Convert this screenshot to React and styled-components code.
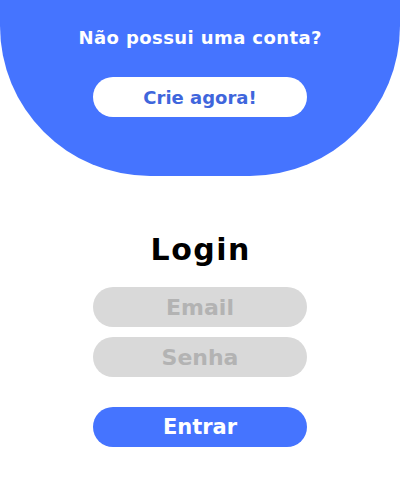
import React, { useState } from "react";
import styled, { createGlobalStyle } from "styled-components";

const GlobalStyle = createGlobalStyle`
    body {
        margin: 0;
        background: #ffffff;
        font-family: "DejaVu Sans", Inter, sans-serif;
    }
`;

export const Page = styled.div`
    width: 400px;
    height: 500px;
    display: flex;
    flex-direction: column;
    align-items: center;
`;

export const Header = styled.header`
    width: 100%;
    height: 176px;
    box-sizing: border-box;
    padding-top: 26px;
    background-color: #4574ff;
    border-radius: 0 0 150px 150px;
    display: flex;
    flex-direction: column;
    align-items: center;
    gap: 27px;
`;

export const Question = styled.p`
    margin: 0;
    color: #ffffff;
    font-size: 18px;
    font-weight: 700;
    line-height: 24px;
    letter-spacing: 0.4px;
    text-indent: 0.4px;
`;

export const Pill = styled.button`
    width: 214px;
    height: 40px;
    border: none;
    border-radius: 20px;
    padding: 0;
    font-family: "DejaVu Sans", Inter, sans-serif;
    font-weight: 700;
    font-size: ${(p) => (p.$small ? "18px" : "21px")};
    color: ${(p) => p.$color};
    background-color: ${(p) => p.$bg};
    cursor: pointer;
`;

export const Form = styled.form`
    display: flex;
    flex-direction: column;
    align-items: center;
    gap: 10px;
    margin-top: 54px;
`;

export const Title = styled.h1`
    margin: 0 0 7px;
    font-size: 30px;
    font-weight: 700;
    line-height: 40px;
    letter-spacing: 1.5px;
    text-indent: 1.5px;
    color: #000000;
`;

export const Input = styled.input`
    width: 214px;
    height: 40px;
    box-sizing: border-box;
    border: none;
    border-radius: 20px;
    background-color: #d9d9d9;
    text-align: center;
    font-family: "DejaVu Sans", Inter, sans-serif;
    font-weight: 700;
    font-size: 22px;
    color: #555;
    outline: none;

    &::placeholder {
        color: #b3b3b3;
    }
`;

export const Actions = styled.div`
    margin-top: 20px;
`;

const App = () => {
    const [email, setEmail] = useState("");
    const [senha, setSenha] = useState("");

    return (
        <Page>
            <GlobalStyle />
            <Header>
                <Question>Não possui uma conta?</Question>
                <Pill type="button" $small $bg="#ffffff" $color="#3f66dc">
                    Crie agora!
                </Pill>
            </Header>
            <Form onSubmit={(e) => e.preventDefault()}>
                <Title>Login</Title>
                <Input
                    type="email"
                    placeholder="Email"
                    value={email}
                    onChange={(e) => setEmail(e.target.value)}
                />
                <Input
                    type="password"
                    placeholder="Senha"
                    value={senha}
                    onChange={(e) => setSenha(e.target.value)}
                />
                <Actions>
                    <Pill type="submit" $bg="#4574ff" $color="#ffffff">
                        Entrar
                    </Pill>
                </Actions>
            </Form>
        </Page>
    );
};

export default App;
